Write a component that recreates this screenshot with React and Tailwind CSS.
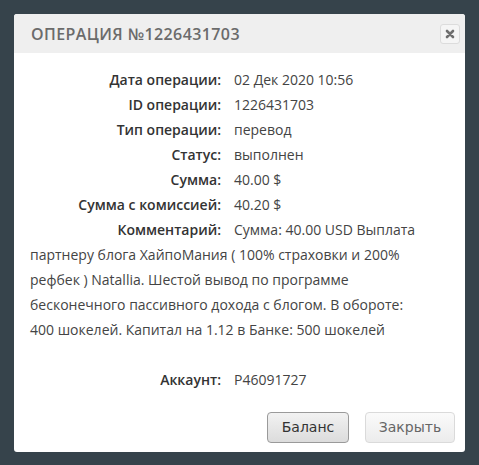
import React from "react";

const rows = [
  ["Дата операции:", "02 Дек 2020 10:56"],
  ["ID операции:", "1226431703"],
  ["Тип операции:", "перевод"],
  ["Статус:", "выполнен"],
  ["Сумма:", "40.00 $"],
  ["Сумма с комиссией:", "40.20 $"],
];

function Row({ label, children }) {
  return (
    <div className="leading-[25px]">
      <span className="inline-block w-[191px] text-right font-semibold text-[#333] mr-[13px]">{label}</span>
      <span>{children}</span>
    </div>
  );
}

export default function App() {
  return (
    <div className="w-[479px] h-[465px] bg-[#36434b] pt-[14px] pl-[14px]" style={{ fontFamily: '"Open Sans", sans-serif' }}>
      <div className="w-[451px] h-[438px] bg-white rounded-[3px] overflow-hidden flex flex-col">
        <div className="h-[39px] bg-[#efefef] flex items-center justify-between pl-[17px] pr-[5px]">
          <div className="text-[16px] font-semibold text-[#6b6b6b] tracking-[0.4px]">ОПЕРАЦИЯ №1226431703</div>
          <button className="w-[20px] h-[20px] border border-[#dcdcdc] rounded-[3px] bg-[#f5f5f5] flex items-center justify-center">
            <svg width="10" height="10" viewBox="0 0 10 10">
              <path d="M2 2 L8 8 M8 2 L2 8" stroke="#6f6f6f" strokeWidth="2.6" strokeLinecap="round" />
            </svg>
          </button>
        </div>
        <div className="px-[16px] pt-[14px] text-[14px] text-[#444]">
          {rows.map(([l, v]) => (
            <Row key={l} label={l}>{v}</Row>
          ))}
          <div className="leading-[25px] pr-[22px]">
            <span className="inline-block w-[191px] text-right font-semibold text-[#333] mr-[13px]">Комментарий:</span>
            Сумма: 40.00 USD Выплата партнеру блога ХайпоМания ( 100% страховки и 200% рефбек ) Natallia. Шестой вывод по программе бесконечного пассивного дохода с блогом. В обороте: 400 шокелей. Капитал на 1.12 в Банке: 500 шокелей
          </div>
          <div className="h-[25px]" />
          <Row label="Аккаунт:">P46091727</Row>
        </div>
        <div className="flex justify-end gap-[16px] pr-[10px] mt-[20px]" style={{ fontFamily: '"DejaVu Sans", sans-serif' }}>
          <button className="w-[82px] h-[31px] rounded-[4px] border border-[#9a9a9a] bg-gradient-to-b from-[#f2f2f2] to-[#dcdcdc] text-[14px] text-[#333]">Баланс</button>
          <button className="w-[90px] h-[31px] rounded-[4px] border border-[#dadada] bg-gradient-to-b from-[#fafafa] to-[#ececec] text-[14px] text-[#666]">Закрыть</button>
        </div>
      </div>
    </div>
  );
}
